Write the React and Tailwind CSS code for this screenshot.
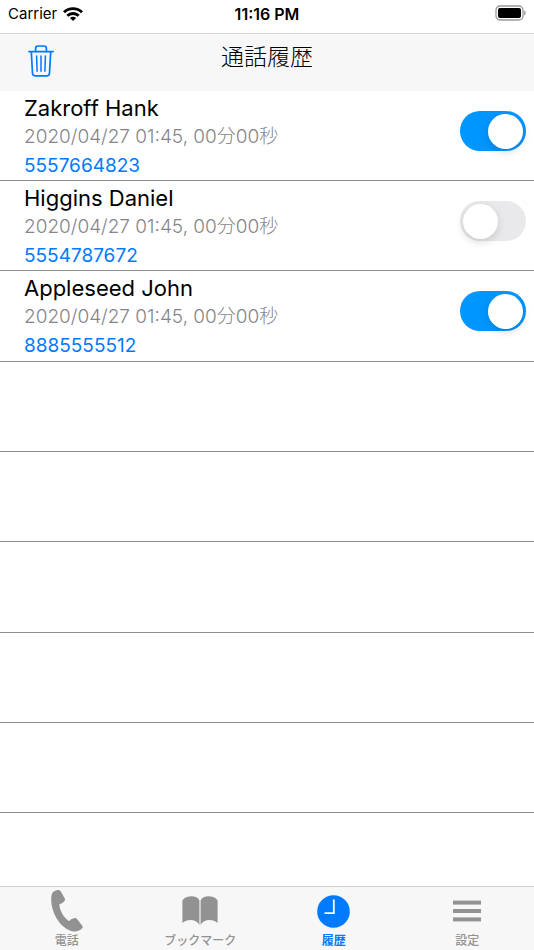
import { useState } from 'react';

const calls = [
  { name: 'Zakroff Hank', time: '2020/04/27 01:45, 00分00秒', number: '5557664823', on: true },
  { name: 'Higgins Daniel', time: '2020/04/27 01:45, 00分00秒', number: '5554787672', on: false },
  { name: 'Appleseed John', time: '2020/04/27 01:45, 00分00秒', number: '8885555512', on: true },
];

const emptyRows = [4, 5, 6, 7, 8];

function WifiIcon() {
  return (
    <svg width="20" height="14" viewBox="0 0 20 14" fill="none" stroke="#000" strokeWidth="2.9" aria-hidden="true">
      <path d="M1 5.2C6 .4 14 .4 19 5.2" />
      <path d="M4.3 8.8C7.5 5.7 12.5 5.7 15.7 8.8" />
      <path d="M10 14 6.9 10.9C8.6 9.3 11.4 9.3 13.1 10.9Z" fill="#000" stroke="none" />
    </svg>
  );
}

function BatteryIcon() {
  return (
    <svg width="31" height="16" viewBox="0 0 31 16" aria-hidden="true">
      <rect x="1" y="1" width="27" height="14" rx="4" fill="none" stroke="#999" strokeWidth="1.3" />
      <rect x="3" y="3" width="23" height="10" rx="2" fill="#000" />
      <path d="M29.2 5.4C31.2 6 31.2 9.8 29.2 10.4Z" fill="#999" />
    </svg>
  );
}

function TrashIcon() {
  return (
    <svg width="26" height="32" viewBox="0 0 26 32" fill="none" stroke="#007aff" strokeWidth="1.7" strokeLinecap="round" strokeLinejoin="round" aria-hidden="true">
      <path d="M.9 6.6H25.1" />
      <path d="M7.6 6.4V3.4C7.6 1.8 8.4 1 10 1H16C17.6 1 18.4 1.8 18.4 3.4V6.4" />
      <path d="M3.3 6.8 4.5 28.3C4.6 30 5.5 30.8 7 30.8H19C20.5 30.8 21.4 30 21.5 28.3L22.7 6.8" />
      <path d="M8.6 11 9.1 26.3M13 11V26.3M17.4 11 16.9 26.3" strokeWidth="1.5" />
    </svg>
  );
}

function PhoneIcon() {
  return (
    <svg width="32" height="42" viewBox="0 0 32 42" fill="#929292" aria-hidden="true">
      <path d="M2.5 1.7C4.5.4 7-.1 8.4.2 9.2.4 9.5.9 9.9 1.6L13.8 8.5C14.3 9.5 14.1 10.3 13.3 11.2 12 12.7 10.5 13.6 8.4 14 8.4 20 12.5 27.4 18 31.2 19.6 29.5 21.5 28.3 23.8 28 24.8 27.9 25.4 28.2 26 29L31.3 35.7C32 36.6 32 37.3 31.4 38.1 29.3 40.8 25.8 41.7 22.5 41.4 10 39.5.3 23.5.2 9.5.2 6 .6 3.1 2.5 1.7Z" />
    </svg>
  );
}

function BookIcon() {
  return (
    <svg width="36" height="30" viewBox="0 0 36 30" fill="#929292" aria-hidden="true">
      <path d="M.4 4.4C3.8-.4 14.8-1.6 17.4 4.6V29C14.6 22.8 5.2 22.4.4 27Z" />
      <path d="M35.6 4.4C32.2-.4 21.2-1.6 18.6 4.6V29C21.4 22.8 30.8 22.4 35.6 27Z" />
    </svg>
  );
}

function ClockIcon() {
  return (
    <svg width="33" height="33" viewBox="0 0 33 33" aria-hidden="true">
      <circle cx="16.5" cy="16.5" r="16.3" fill="#007aff" />
      <path d="M16.8 4.6V18.2H7.5" fill="none" stroke="#fff" strokeWidth="1.8" />
    </svg>
  );
}

function MenuIcon() {
  return (
    <svg width="28" height="22" viewBox="0 0 28 22" fill="#929292" aria-hidden="true">
      <rect x="0" y="0.6" width="28" height="4" />
      <rect x="0" y="9" width="28" height="4" />
      <rect x="0" y="17.4" width="28" height="4" />
    </svg>
  );
}

const tabs = [
  { label: '電話', Icon: PhoneIcon },
  { label: 'ブックマーク', Icon: BookIcon },
  { label: '履歴', Icon: ClockIcon },
  { label: '設定', Icon: MenuIcon },
];

function CallRow({ call }) {
  const [on, setOn] = useState(call.on);
  return (
    <li className="flex h-[90px] items-start border-b border-[#8e8e8e] pr-2 pl-6 nth-[3n]:h-[91px]">
      <div className="min-w-0 flex-1 pt-0.5">
        <h2 className="text-[22px] leading-[30px] text-black">{call.name}</h2>
        <p className="text-[19px] leading-7 font-light text-[#85858a]">{call.time}</p>
        <a href={'tel:' + call.number} className="block text-[19px] leading-[30px] text-[#007aff]">
          {call.number}
        </a>
      </div>
      <input
        type="checkbox"
        role="switch"
        aria-label={call.name}
        checked={on}
        onChange={(e) => setOn(e.target.checked)}
        className="mt-5 flex h-10 w-[66px] shrink-0 appearance-none items-center rounded-full bg-[#e9e9eb] px-[3px] before:size-[35px] before:rounded-full before:bg-white before:shadow-[0_3px_8px_rgba(0,0,0,0.15)] before:content-[''] checked:justify-end checked:bg-[#0096ff]"
      />
    </li>
  );
}

export default function App() {
  const [active, setActive] = useState('履歴');
  return (
    <div lang="ja" className="flex min-h-screen flex-col bg-white font-['Inter','Noto_Sans_CJK_JP',sans-serif]">
      <div className="grid h-[33px] grid-cols-3 items-start px-2 pt-1 text-[15px] leading-5 text-black">
        <div className="flex items-center gap-1.5">
          <span>Carrier</span>
          <WifiIcon />
        </div>
        <span className="text-center text-base leading-5 font-semibold">11:16 PM</span>
        <div className="flex h-[18px] items-center justify-end">
          <BatteryIcon />
        </div>
      </div>
      <header className="grid h-[58px] grid-cols-3 items-start border-t border-[#d4d4d6] bg-[#f7f7f7] px-7 pt-[11px]">
        <button type="button" aria-label="削除" className="w-[26px]">
          <TrashIcon />
        </button>
        <h1 className="text-center text-[23px] leading-6 font-light text-black">通話履歴</h1>
      </header>
      <ul className="flex flex-1 flex-col">
        {calls.map((call) => (
          <CallRow key={call.number} call={call} />
        ))}
        {emptyRows.map((row) => (
          <li key={row} className="h-[90px] border-b border-[#8e8e8e] nth-[3n]:h-[91px]" />
        ))}
      </ul>
      <nav className="grid h-16 grid-cols-4 border-t border-[#d0d0d2] bg-[#f7f7f7]">
        {tabs.map(({ label, Icon }) => (
          <button
            key={label}
            type="button"
            onClick={() => setActive(label)}
            className={
              active === label
                ? 'flex flex-col items-center pt-[3px] text-xs leading-[18px] font-bold text-[#007aff]'
                : 'flex flex-col items-center pt-[3px] text-xs leading-[18px] font-medium text-[#929292]'
            }
          >
            <span className="flex h-[42px] items-center">
              <Icon />
            </span>
            {label}
          </button>
        ))}
      </nav>
    </div>
  );
}
